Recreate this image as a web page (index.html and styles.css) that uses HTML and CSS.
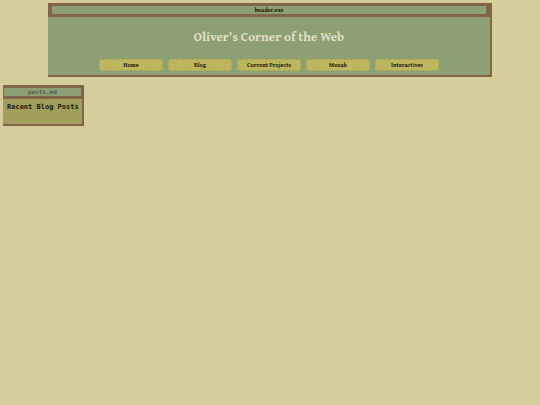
FILE: index.html
```
<!DOCTYPE html>
<html lang="en">
<head>
  <meta charset="UTF-8" />
  <meta name="viewport" content="width=device-width, initial-scale=1" />
  <title>Oliver's Corner of the Web</title>
  <link rel="stylesheet" href="styles.css">
</head>
<body>
  <header class="window header">
    <div class="titlebar"><div class="filename">header.exe</div></div>
    <h1>Oliver's Corner of the Web</h1>
    <nav>
      <a href="#home">Home</a>
      <a href="#blog">Blog</a>
      <a href="#projects">Current Projects</a>
      <a href="#muzak">Muzak</a>
      <a href="#interactives">Interactives</a>
    </nav>
  </header>

  <main>
    <section class="window posts">
      <div class="titlebar"><div class="filename">posts.md</div></div>
      <h2>Recent Blog Posts</h2>
    </section>
  </main>
</body>
</html>
```
FILE: styles.css
```
* {
  box-sizing: border-box;
}

body {
  margin: 0;
  padding: 3px;
  background: #d5ce9c;
  color: #15180c;
  font-family: "Gentium Book Plus", "Gentium Book Basic", "Liberation Serif", serif;
}

.window {
  border-right: 2px solid #83634a;
  border-bottom: 2px solid #83634a;
}

.titlebar {
  background: #83634a;
}

.filename {
  background: #8ca074;
  font-size: 6px;
  text-align: center;
  line-height: 8px;
}

.header {
  width: 83%;
  margin: 0 auto 8px;
  background: #8ca074;
}

.header .titlebar {
  padding: 3px 4px;
}

.header .filename {
  font-weight: bold;
}

h1 {
  margin: 0;
  padding: 12px 0 14px;
  color: #e4dfc9;
  font-size: 13px;
  line-height: 16px;
  text-align: center;
}

nav {
  display: flex;
  justify-content: center;
  gap: 5px;
  padding: 0 4px 4px;
}

nav a {
  flex: 0 1 64px;
  border: 1px dashed #a3a35c;
  border-radius: 3px;
  background: #bdb65f;
  color: #15180c;
  font-size: 6px;
  font-weight: bold;
  line-height: 10px;
  text-align: center;
  text-decoration: none;
  white-space: nowrap;
}

.posts {
  width: fit-content;
  background: #a29e5c;
  font-family: "DejaVu Sans Mono", monospace;
}

.posts .titlebar {
  padding: 3px 1px;
}

.posts .filename {
  color: #34402a;
}

h2 {
  margin: 0;
  padding: 4px 3px 12px 4px;
  font-size: 7px;
  line-height: 9px;
}
```
